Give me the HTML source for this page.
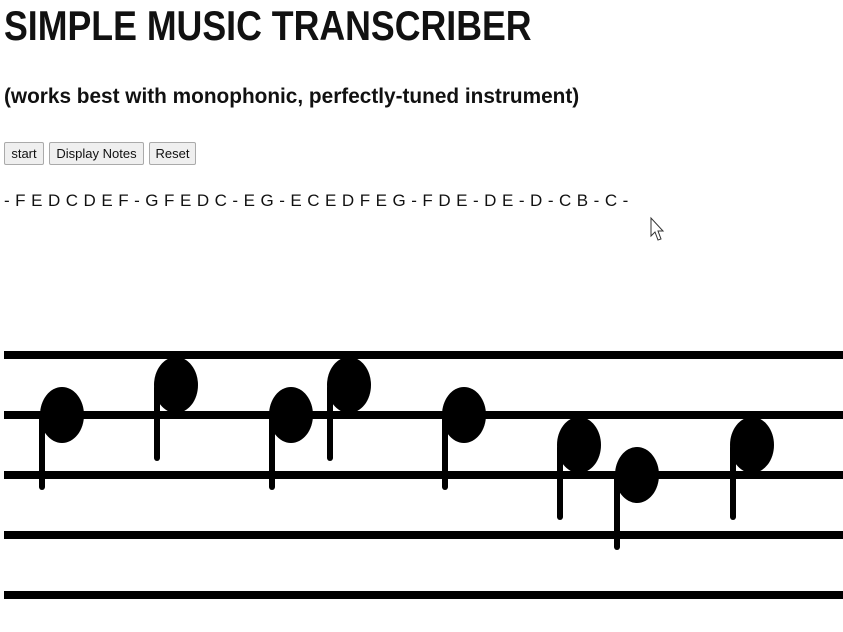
<!DOCTYPE html>
<html><head><style>
body{margin:0;width:843px;height:632px;background:#fff;font-family:"Liberation Sans",Arial,sans-serif;color:#111;overflow:hidden;position:relative}
.t{position:absolute;left:4px;top:2px;font-weight:bold;font-size:42px;white-space:nowrap;transform-origin:0 0;transform:scaleX(0.85)}
.s{position:absolute;left:4px;top:85px;font-weight:bold;font-size:21px;white-space:nowrap;transform-origin:0 0;transform:scaleX(0.99)}
.b{position:absolute;top:142px;height:23px;border:1px solid #aaa;border-radius:2px;background:#efefef;font-size:13px;line-height:21px;text-align:center;box-sizing:border-box;transform-origin:0 0}
.n{position:absolute;left:4px;top:191px;font-size:17px;letter-spacing:0.4px;white-space:nowrap}
</style></head><body>
<div class="t">SIMPLE MUSIC TRANSCRIBER</div>
<div class="s">(works best with monophonic, perfectly-tuned instrument)</div>
<div class="b" style="left:4px;width:40px">start</div>
<div class="b" style="left:49px;width:95px">Display Notes</div>
<div class="b" style="left:149px;width:47px">Reset</div>
<div class="n">- F E D C D E F - G F E D C - E G - E C E D F E G - F D E - D E - D - C B - C -</div>
<svg style="position:absolute;left:0;top:0" width="843" height="632">
<g fill="#000">
<rect x="4" y="351" width="839" height="8"/>
<rect x="4" y="411" width="839" height="8"/>
<rect x="4" y="471" width="839" height="8"/>
<rect x="4" y="531" width="839" height="8"/>
<rect x="4" y="591" width="839" height="8"/>
<ellipse cx="62" cy="415" rx="22" ry="28"/><rect x="39" y="415" width="6" height="75" rx="3"/>
<ellipse cx="176" cy="385" rx="22" ry="28"/><rect x="154" y="385" width="6" height="76" rx="3"/>
<ellipse cx="291" cy="415" rx="22" ry="28"/><rect x="269" y="415" width="6" height="75" rx="3"/>
<ellipse cx="349" cy="385" rx="22" ry="28"/><rect x="327" y="385" width="6" height="76" rx="3"/>
<ellipse cx="464" cy="415" rx="22" ry="28"/><rect x="442" y="415" width="6" height="75" rx="3"/>
<ellipse cx="579" cy="445" rx="22" ry="28"/><rect x="557" y="445" width="6" height="75" rx="3"/>
<ellipse cx="637" cy="475" rx="22" ry="28"/><rect x="614" y="475" width="6" height="75" rx="3"/>
<ellipse cx="752" cy="445" rx="22" ry="28"/><rect x="730" y="445" width="6" height="75" rx="3"/>
</g>
<path d="M651 218 L651 236 L655 232 L658 240 L661 239 L658 231 L663 231 Z" fill="#fff" stroke="#333" stroke-width="1"/>
</svg>
</body></html>
